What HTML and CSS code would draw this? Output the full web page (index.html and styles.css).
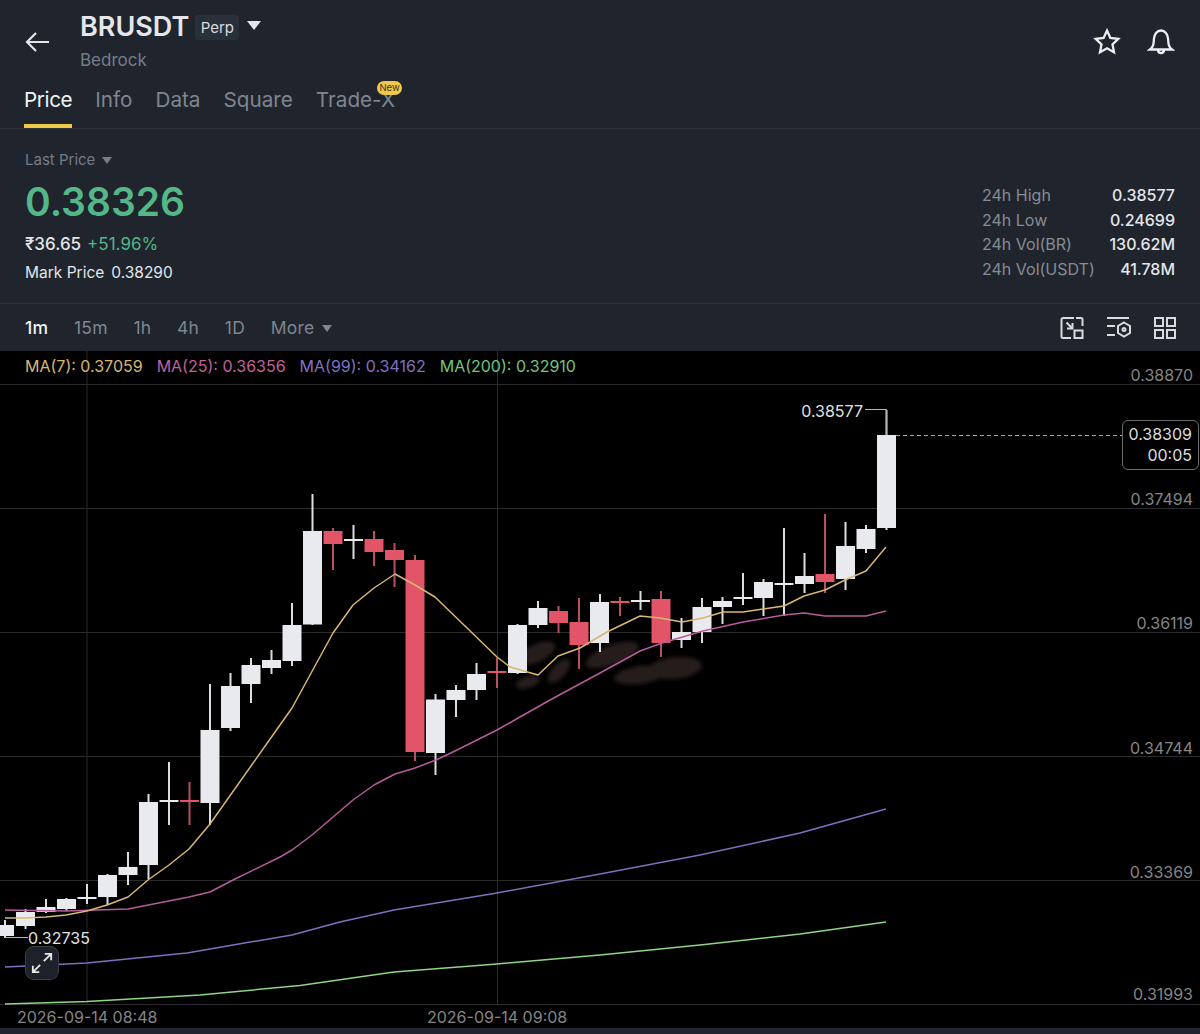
FILE: index.html
```html
<!DOCTYPE html>
<html lang="en">
<head>
  <meta charset="UTF-8" />
  <title>BRUSDT Perp</title>
  <link rel="stylesheet" href="styles.css">
</head>
<body>

<header class="top-bar">
  <button class="back-btn" aria-label="Back">
    <svg width="28" height="24" viewBox="0 0 28 24"><path d="M25 12H3M12 3l-9 9 9 9" /></svg>
  </button>
  <div class="symbol">
    <div class="symbol-row">
      <h1 class="symbol-name">BRUSDT</h1>
      <span class="perp-badge">Perp</span>
      <span class="caret caret-big"></span>
    </div>
    <div class="symbol-sub">Bedrock</div>
  </div>
  <div class="top-icons">
    <svg width="28" height="28" viewBox="0 0 28 28"><path d="M14 2.6l3.4 7.3 7.9 1-5.8 5.4 1.5 7.9-7-3.9-7 3.9 1.5-7.9-5.8-5.4 7.9-1z" /></svg>
    <svg width="28" height="28" viewBox="0 0 28 28"><path d="M3 21.5c2.6-2 3.5-4 3.7-7.5l.2-3C7.2 6.400 10 2.500 14 2.500s6.800 3.900 7.100 8.500l.2 3c.2 3.500 1.100 5.500 3.700 7.500zM10.800 21.500c.3 2.300 1.600 3.600 3.200 3.600s2.900-1.300 3.200-3.600" /></svg>
  </div>
</header>

<nav class="tabs">
  <a class="tab tab-active">Price</a>
  <a class="tab">Info</a>
  <a class="tab">Data</a>
  <a class="tab">Square</a>
  <a class="tab tab-new">Trade-X<span class="new-badge">New</span></a>
</nav>

<section class="summary">
  <div class="summary-left">
    <div class="last-label">Last Price <span class="caret"></span></div>
    <div class="last-price">0.38326</div>
    <div class="fiat"><span>₹36.65</span><span class="change">+51.96%</span></div>
    <div class="mark">Mark Price<span>0.38290</span></div>
  </div>
  <dl class="stats">
    <dt>24h High</dt><dd>0.38577</dd>
    <dt>24h Low</dt><dd>0.24699</dd>
    <dt>24h Vol(BR)</dt><dd>130.62M</dd>
    <dt>24h Vol(USDT)</dt><dd>41.78M</dd>
  </dl>
</section>

<section class="toolbar">
  <a class="tf tf-active">1m</a>
  <a class="tf">15m</a>
  <a class="tf">1h</a>
  <a class="tf">4h</a>
  <a class="tf">1D</a>
  <a class="tf tf-more">More <span class="caret"></span></a>
  <div class="tool-icons">
    <svg width="26" height="26" viewBox="0 0 26 26"><path d="M15 3H4a1.500 1.500 0 0 0-1.500 1.500v17A1.500 1.500 0 0 0 4 23h8M17 3h5a1.500 1.500 0 0 1 1.500 1.500V11M7.500 7.500l6 6M8 13.500h5.500V8M15.500 15.500h8v7.500h-8z" /></svg>
    <svg width="26" height="26" viewBox="0 0 26 26"><path d="M1 3h22M1 11h8M1 20h8M18 7.500l6 3.500v7l-6 3.500-6-3.500v-7z" /><circle cx="18" cy="14.500" r="1.500" /></svg>
    <svg width="24" height="24" viewBox="0 0 24 24"><path d="M2 2h8v8H2zM14 2h8v8h-8zM2 14h8v8H2zM14 14h8v8h-8z" /></svg>
  </div>
</section>

<main class="chart">
  <svg class="chart-svg" width="1200" height="677" viewBox="0 351 1200 677">
    <defs>
      <filter id="smear" x="-30%" y="-30%" width="160%" height="160%"><feGaussianBlur stdDeviation="2" /></filter>
    </defs>

    <path class="grid" d="M0 384.500H1200M0 508.500H1200M0 632.500H1200M0 756.500H1200M0 880.500H1200M0 1004.500H1200M87 351V1004M497.500 351V1004" />

    <g class="smears" filter="url(#smear)">
      <ellipse cx="537" cy="653" rx="20" ry="9" transform="rotate(-25 537 653)" />
      <ellipse cx="559" cy="671" rx="15" ry="7" transform="rotate(-48 559 671)" />
      <ellipse cx="528" cy="682" rx="13" ry="6" transform="rotate(-18 528 682)" />
      <ellipse cx="612" cy="655" rx="28" ry="10" transform="rotate(-20 612 655)" />
      <ellipse cx="640" cy="675" rx="26" ry="9" transform="rotate(-8 640 675)" />
      <ellipse cx="675" cy="668" rx="27" ry="11" transform="rotate(-6 675 668)" />
    </g>

    <path class="wick-up" d="M5 920V938M25.500 909V929M46 899V913M66.500 898V911M87 884V904M107.500 874V905M128 852V885M148.500 794V879M169 762V825M210 684V825M230.500 673V731M251 658V703M271.500 650V674M292 603V666M312.500 494V625M353.500 525V559M435.500 694V775M456 685V717M476.500 663V700M517.500 624V674M538 601V628M600 594V652M640.500 591V610M681.500 618V648M702 598V643M722.500 597V624M743 573V605M763.500 579V616M784 528V616M804.500 553V593M845.500 522V590M866 525V553M886.500 410V530" />
    <path class="wick-down" d="M189.500 782V825M333 528V570M374 531V566M394.500 543V587M415 555V761M497 658V688M558.500 606V633M579 598V669M620 597V616M661 591V657M825 514V593" />

    <g class="body-up">
      <rect x="-5" y="925" width="19" height="11" />
      <rect x="16" y="912" width="19" height="14" />
      <rect x="36.500" y="907" width="19" height="5" />
      <rect x="57" y="899" width="19" height="10" />
      <rect x="77.500" y="897" width="19" height="2" />
      <rect x="98" y="875" width="19" height="22" />
      <rect x="118.500" y="867" width="19" height="8" />
      <rect x="139" y="802" width="19" height="63" />
      <rect x="159.500" y="800" width="19" height="2" />
      <rect x="200.500" y="730" width="19" height="73" />
      <rect x="221" y="686" width="19" height="42" />
      <rect x="241.500" y="665" width="19" height="19" />
      <rect x="262" y="660" width="19" height="8" />
      <rect x="282.500" y="625" width="19" height="36" />
      <rect x="303" y="531" width="19" height="93.500" />
      <rect x="344" y="539" width="19" height="2" />
      <rect x="426" y="699.500" width="19" height="53.500" />
      <rect x="446.500" y="690" width="19" height="10" />
      <rect x="467" y="674" width="19" height="16" />
      <rect x="508" y="625" width="19" height="48" />
      <rect x="528.500" y="608" width="19" height="17" />
      <rect x="590" y="602" width="19" height="41" />
      <rect x="631" y="600" width="19" height="2" />
      <rect x="672" y="632" width="19" height="8" />
      <rect x="692.500" y="607" width="19" height="25" />
      <rect x="713" y="601" width="19" height="6" />
      <rect x="733.500" y="597" width="19" height="2" />
      <rect x="754" y="582" width="19" height="16" />
      <rect x="774.500" y="583" width="19" height="2" />
      <rect x="795" y="576" width="19" height="8" />
      <rect x="836" y="546" width="19" height="33" />
      <rect x="856.500" y="529" width="19" height="20" />
      <rect x="877" y="435" width="19" height="93" />
    </g>
    <g class="body-down">
      <rect x="180" y="800" width="19" height="2" />
      <rect x="323.500" y="531" width="19" height="13" />
      <rect x="364.500" y="539" width="19" height="13" />
      <rect x="385" y="550" width="19" height="10" />
      <rect x="405.500" y="560" width="19" height="192" />
      <rect x="487.500" y="671" width="19" height="2" />
      <rect x="549" y="611" width="19" height="12" />
      <rect x="569.500" y="622" width="19" height="23" />
      <rect x="610.500" y="601" width="19" height="2" />
      <rect x="651.500" y="599" width="19" height="44" />
      <rect x="815.500" y="574" width="19" height="8" />
    </g>

    <polyline class="ma ma200" points="5,1004 87,1001.500 200,995 300,985.500 394,972 497,964 600,955 700,945 800,934 886,922" />
    <polyline class="ma ma99" points="5,967 87,963 187,953 233,945 292,935 340,922 394,910 497,893 600,874 700,855 800,833 886,809" />
    <polyline class="ma ma25" points="5,910 66,911 128,909 189,897 210,892 233,880 280,857 292,850 312,835 333,817 353,800 374,785 395,774 415,768 436,760 457,750 497,730 520,717 550,700 600,673 640,651 662,643 703,631 743,622 784,615 804,613 825,616 866,616 886,611" />
    <polyline class="ma ma7" points="5,918 25,918 46,917 66,915 87,911 107,905 128,897 148,880 169,865 189,849 210,824 280,725 292,708 333,633 353,605 374,588 395,574 415,585 435,597 497,657 510,667 538,675 558,656 580,648 607,632 640,616 660,618 682,622 703,618 723,612 743,612 763,609 784,606 804,596 825,590 845,580 866,571 886,547" />

    <path class="dash" d="M896 435.500H1122" />
    <path class="leader" d="M865 409.500H886.500V435M5 937.500H28" />

    <g class="axis">
      <text x="1193" y="381">0.38870</text>
      <text x="1193" y="505">0.37494</text>
      <text x="1193" y="629">0.36119</text>
      <text x="1193" y="754">0.34744</text>
      <text x="1193" y="878">0.33369</text>
      <text x="1193" y="1000">0.31993</text>
    </g>
    <text class="peak" x="863" y="417" text-anchor="end">0.38577</text>
    <text class="peak" x="28" y="944">0.32735</text>
    <text class="date" x="17" y="1023">2026-09-14 08:48</text>
    <text class="date" x="427" y="1023">2026-09-14 09:08</text>
  </svg>

  <div class="legend">
    <span class="lg-7">MA(7): 0.37059</span>
    <span class="lg-25">MA(25): 0.36356</span>
    <span class="lg-99">MA(99): 0.34162</span>
    <span class="lg-200">MA(200): 0.32910</span>
  </div>
  <div class="price-tag">0.38309<br>00:05</div>
  <button class="expand-btn" aria-label="Expand">
    <svg width="24" height="24" viewBox="0 0 24 24"><path d="M14 10l8-8M15 2h7v7M10 14l-8 8M2 15v7h7" /></svg>
  </button>
</main>

<div class="bottom-strip"></div>

</body>
</html>
```

FILE: styles.css
```css
:root {
  --panel: #1f242d;
  --line: #2c313a;
  --muted: #767d87;
  --text: #e4e6e9;
  --green: #55b687;
  --yellow: #f0c94a;
}
* {
  box-sizing: border-box;
}
body {
  margin: 0;
  width: 1200px;
  height: 1034px;
  overflow: hidden;
  background: var(--panel);
  color: var(--text);
  font-family: Inter, "Liberation Sans", sans-serif;
}
button {
  background: none;
  border: none;
  padding: 0;
  color: inherit;
}
svg path, svg circle {
  fill: none;
  stroke: currentColor;
  stroke-width: 2;
}
.caret {
  display: inline-block;
  width: 0;
  height: 0;
  border-left: 5.5px solid transparent;
  border-right: 5.5px solid transparent;
  border-top: 7px solid currentColor;
  vertical-align: 2px;
}

/* top */
.top-bar {
  display: flex;
  align-items: flex-start;
  height: 80px;
  padding: 11px 25px 0 24px;
}
.back-btn {
  margin-top: 19px;
  width: 56px;
  text-align: left;
  line-height: 0;
}
.back-btn svg path {
  stroke-width: 2.2;
}
.symbol-row {
  display: flex;
  align-items: center;
  height: 32px;
}
.symbol-name {
  margin: 0;
  font-size: 27px;
  font-weight: 600;
  line-height: 32px;
}
.perp-badge {
  margin-left: 6px;
  width: 44px;
  height: 25px;
  line-height: 25px;
  text-align: center;
  font-size: 15px;
  background: #2a303a;
  border-radius: 3px;
  color: #d8dade;
}
.caret-big {
  margin-left: 8px;
  margin-top: -3px;
  border-left-width: 7.5px;
  border-right-width: 7.5px;
  border-top-width: 9px;
}
.symbol-sub {
  margin-top: 7px;
  font-size: 17px;
  color: var(--muted);
}
.top-icons {
  margin-left: auto;
  margin-top: 17px;
  display: flex;
  gap: 26px;
}
.top-icons svg {
  color: #eceef0;
}
.top-icons svg path {
  stroke-width: 2.3;
}

.tabs {
  display: flex;
  gap: 23px;
  height: 49px;
  padding: 7px 0 0 24px;
  border-bottom: 1px solid var(--line);
}
.tab {
  position: relative;
  height: 41px;
  font-size: 20.700px;
  line-height: 26px;
  color: #7f868f;
}
.tab-active {
  color: #f2f3f4;
  letter-spacing: -0.4px;
  border-bottom: 4px solid var(--yellow);
}
.new-badge {
  position: absolute;
  right: -7px;
  top: -6px;
  width: 25px;
  height: 14px;
  line-height: 14px;
  border-radius: 7px;
  background: var(--yellow);
  color: #3a3320;
  font-size: 9.500px;
  text-align: center;
}

/* price summary */
.summary {
  display: flex;
  justify-content: space-between;
  height: 175px;
  padding: 22px 25px 0 25px;
  border-bottom: 1px solid var(--line);
}
.last-label {
  font-size: 15px;
  line-height: 18px;
  color: var(--muted);
}
.last-label .caret {
  margin-left: 2px;
  vertical-align: 1px;
}
.last-price {
  margin-top: 10px;
  font-size: 39px;
  line-height: 46px;
  font-weight: 600;
  color: var(--green);
}
.fiat {
  margin-top: 8px;
  display: flex;
  gap: 6px;
  font-size: 17px;
  line-height: 22px;
  font-weight: 500;
}
.change {
  color: var(--green);
  font-weight: 400;
}
.mark {
  margin-top: 8px;
  font-size: 15.500px;
  line-height: 20px;
}
.mark span {
  margin-left: 7px;
}
.stats {
  margin: 32px 0 0;
  display: grid;
  grid-template-columns: 1fr auto;
  grid-auto-rows: 24.600px;
  font-size: 16px;
  line-height: 24.600px;
  width: 193px;
  height: 99px;
}
.stats dt {
  color: #868c95;
  white-space: nowrap;
}
.stats dd {
  margin: 0;
  text-align: right;
  font-weight: 500;
}

/* timeframes */
.toolbar {
  display: flex;
  align-items: center;
  gap: 25.500px;
  height: 47px;
  padding: 0 23px 0 25px;
  font-size: 17.500px;
  letter-spacing: 0.3px;
  color: #7f868f;
}
.tf-active {
  color: #f2f3f4;
  font-weight: 500;
}
.tf-more .caret {
  margin-left: 2px;
  vertical-align: 2px;
}
.tool-icons {
  margin-left: auto;
  display: flex;
  align-items: center;
  gap: 21px;
  color: #d9dbde;
}

/* chart */
.chart {
  position: relative;
  height: 677px;
  background: #000;
}
.chart-svg {
  display: block;
}
.chart-svg path, .chart-svg polyline {
  fill: none;
}
.chart-svg .grid {
  stroke: #2b2b2d;
  stroke-width: 1;
}
.smears {
  fill: #261b1d;
}
.chart-svg .wick-up {
  stroke: #dcdde0;
  stroke-width: 2;
}
.chart-svg .wick-down {
  stroke: #b8505f;
  stroke-width: 2;
}
.body-up {
  fill: #e9eaed;
}
.body-down {
  fill: #e25568;
}
.ma {
  stroke-width: 1.500;
  stroke-linejoin: round;
}
.ma7 {
  stroke: #d9b673;
}
.ma25 {
  stroke: #b65c9c;
}
.ma99 {
  stroke: #7e70bd;
}
.ma200 {
  stroke: #8fd487;
}
.chart-svg .dash {
  stroke: #a8a8a8;
  stroke-width: 1;
  stroke-dasharray: 4 3;
}
.chart-svg .leader {
  stroke: #b5b5b5;
  stroke-width: 1;
}
.axis text {
  text-anchor: end;
  fill: #858585;
  font-size: 16px;
}
.peak {
  fill: #e2e2e2;
  font-size: 16px;
}
.date {
  fill: #858585;
  font-size: 16px;
}
.legend {
  position: absolute;
  left: 25px;
  top: 6px;
  display: flex;
  gap: 14px;
  font-size: 16px;
  line-height: 18px;
}
.lg-7 {
  color: #d9b673;
}
.lg-25 {
  color: #c2619f;
}
.lg-99 {
  color: #7f72c4;
}
.lg-200 {
  color: #74c47c;
}
.price-tag {
  position: absolute;
  left: 1122px;
  top: 69px;
  width: 77px;
  height: 50px;
  padding: 3px 6px 0 0;
  border: 1px solid #6b6b6b;
  border-radius: 6px;
  background: #000;
  color: #dcdcdc;
  font-size: 16px;
  line-height: 21px;
  text-align: right;
}
.expand-btn {
  position: absolute;
  left: 25px;
  top: 595px;
  width: 34px;
  height: 34px;
  display: flex;
  align-items: center;
  justify-content: center;
  background: #1d2129;
  border: 1px solid #3b3f47;
  border-radius: 9px;
  color: #e6e7e9;
}
.expand-btn svg {
  width: 22px;
  height: 22px;
}
.bottom-strip {
  height: 6px;
  background: var(--panel);
}
```
